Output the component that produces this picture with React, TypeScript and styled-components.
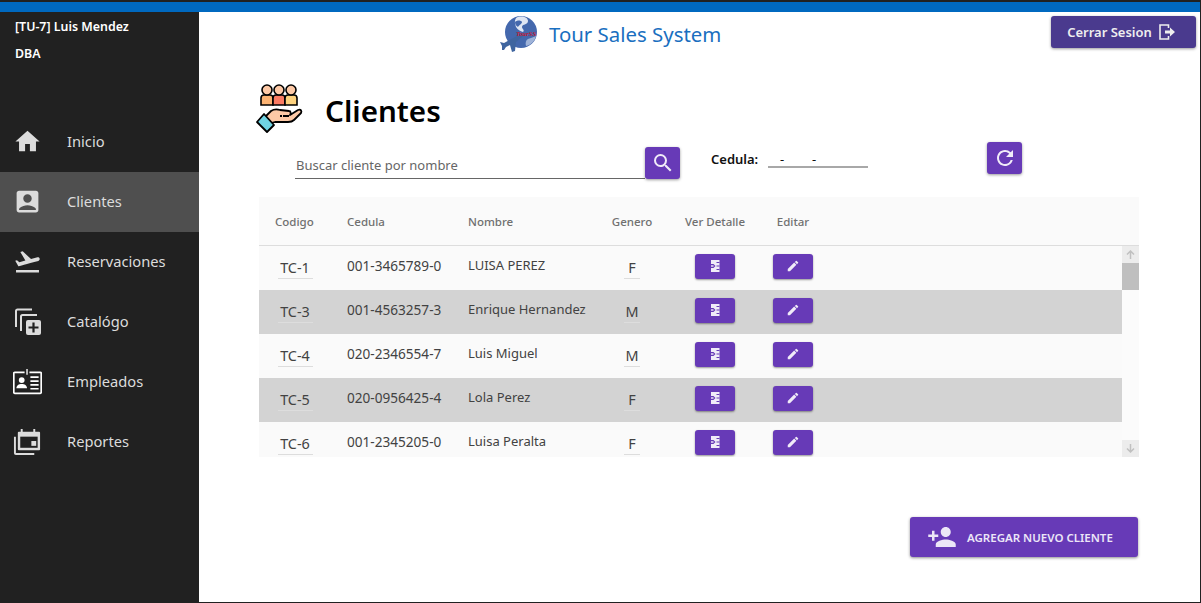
import styled, { createGlobalStyle } from 'styled-components';
import {
  MdAccountBox,
  MdCreate,
  MdFlightTakeoff,
  MdHome,
  MdPersonAdd,
  MdRefresh,
  MdSearch,
} from 'react-icons/md';

const GlobalStyle = createGlobalStyle`
  html, body {
    margin: 0;
    height: 100%;
    overflow: hidden;
    background: #fff;
    font-family: "Noto Sans", "Open Sans", sans-serif;
  }
  * { box-sizing: border-box; }
`;

const Page = styled.div`
  width: 1201px;
  height: 603px;
  display: flex;
  flex-direction: column;
  background: #fff;
  border-right: 1px solid #212121;
  border-bottom: 1px solid #212121;
`;

const TopBar = styled.div`
  height: 12px;
  flex: none;
  background: #0069c0;
  border-top: 2px solid #212121;
`;

const Body = styled.div`
  flex: 1;
  display: flex;
  min-height: 0;
`;

const Sidebar = styled.aside`
  width: 199px;
  flex: none;
  background: #212121;
`;

const UserBox = styled.div`
  height: 100px;
  padding: 1px 0 0 15px;
  color: #fff;
  font-size: 12.4px;
  font-weight: 600;
  line-height: 27px;
`;

const NavItem = styled.div<{ $active?: boolean }>`
  height: 60px;
  display: flex;
  align-items: center;
  padding: 0 0 2px 13px;
  gap: 25px;
  color: #dcdcdc;
  font-size: 14.7px;
  background: ${(p) => (p.$active ? '#4f4f4f' : 'transparent')};

  svg {
    width: 29px;
    height: 29px;
    flex: none;
    color: #dcdcdc;
  }
`;

const Main = styled.main`
  flex: 1;
  min-width: 0;
  display: flex;
  flex-direction: column;
`;

const Header = styled.header`
  height: 38px;
  display: flex;
  align-items: flex-start;
  padding: 0 4px 0 301px;
`;

const Brand = styled.div`
  display: flex;
  align-items: center;
  gap: 10px;
  height: 43px;
  color: #1a6fc0;
  font-size: 20.4px;
`;

const LogoutButton = styled.button`
  margin: 4px 0 0 auto;
  width: 145px;
  height: 32px;
  padding: 0 4px 0 0;
  display: flex;
  align-items: center;
  justify-content: center;
  gap: 6px;
  border: none;
  border-radius: 3px;
  background: #4a3a8e;
  color: #eee;
  font: 600 13px "Noto Sans", sans-serif;
  box-shadow: 0 1px 3px rgba(0, 0, 0, 0.4);
`;

const TitleRow = styled.div`
  display: flex;
  align-items: center;
  gap: 20px;
  height: 50px;
  margin: 33px 0 0 56px;
`;

const Title = styled.h1`
  margin: 4px 0 0;
  font-size: 29.6px;
  font-weight: 600;
  color: #000;
`;

const FilterRow = styled.div`
  display: flex;
  align-items: flex-start;
  height: 51px;
  margin: 13px 0 0 96px;
`;

const SearchField = styled.div`
  width: 350px;
  height: 28px;
  margin-top: 5px;
  padding: 5px 0 0 1px;
  border-bottom: 1px solid #666;
  color: #666;
  font-size: 13px;
`;

const IconButton = styled.button<{ $gap?: number; $top?: number }>`
  width: 35px;
  height: 32px;
  flex: none;
  margin-left: ${(p) => p.$gap ?? 0}px;
  margin-top: ${(p) => p.$top ?? 0}px;
  padding: 0;
  display: flex;
  align-items: center;
  justify-content: center;
  border: none;
  border-radius: 3px;
  background: #673ab7;
  color: #f0ebf8;
  box-shadow: 0 1px 3px rgba(0, 0, 0, 0.4);

  svg {
    width: 24px;
    height: 24px;
  }
`;

const CedulaLabel = styled.label`
  margin: 4px 0 0 31px;
  width: 57px;
  color: #111;
  font-size: 13px;
  font-weight: 600;
  line-height: 18px;
`;

const CedulaMask = styled.div`
  width: 100px;
  height: 22px;
  padding-left: 12px;
  border-bottom: 2px solid #a8a8a8;
  color: #111;
  font-size: 13px;
  line-height: 26px;

  span {
    display: inline-block;
    width: 32px;
  }
`;

const TableCard = styled.section`
  width: 880px;
  margin: 0 0 0 60px;
  background: #fafafa;
`;

const columns = '72px 121px 150px 60px 106px 50px 1fr';

const HeadRow = styled.div`
  height: 49px;
  display: grid;
  grid-template-columns: ${columns};
  align-items: center;
  border-bottom: 1px solid #ddd;
  color: #707070;
  font-size: 11.5px;
  font-weight: 500;
`;

const HeadCell = styled.div<{ $center?: boolean }>`
  padding-left: ${(p) => (p.$center ? 0 : 16)}px;
  text-align: ${(p) => (p.$center ? 'center' : 'left')};
  white-space: nowrap;
`;

const ScrollArea = styled.div`
  height: 211px;
  display: flex;
  overflow: hidden;
`;

const Rows = styled.div`
  flex: 1;
  min-width: 0;
`;

const Row = styled.div<{ $shaded: boolean }>`
  height: 44px;
  display: grid;
  grid-template-columns: ${columns};
  align-items: center;
  background: ${(p) => (p.$shaded ? '#d3d3d3' : '#fafafa')};
  color: #424242;
`;

const TextCell = styled.div<{ $size: number }>`
  padding: 0 0 6px 16px;
  font-size: ${(p) => p.$size}px;
  white-space: nowrap;
`;

const UnderlinedCell = styled.div<{ $wide?: boolean }>`
  display: flex;
  justify-content: center;
  padding-top: 1px;

  span {
    min-width: ${(p) => (p.$wide ? 35 : 16)}px;
    padding: 0 1px 1px;
    text-align: center;
    border-bottom: 1px solid #ddd;
    font-size: 14.4px;
    line-height: 19px;
  }
`;

const ActionCell = styled.div`
  display: flex;
  justify-content: center;
  padding-bottom: 4px;
`;

const RowButton = styled.button`
  width: 40px;
  height: 25px;
  flex: none;
  padding: 0;
  display: flex;
  align-items: center;
  justify-content: center;
  border: none;
  border-radius: 3px;
  background: #673ab7;
  color: #f0ebf8;
  box-shadow: 0 1px 2px rgba(0, 0, 0, 0.4);

  svg {
    width: 14px;
    height: 14px;
  }
`;

const ScrollBar = styled.div`
  width: 17px;
  flex: none;
  display: flex;
  flex-direction: column;
  background: #fbfbfb;
`;

const ScrollArrow = styled.div`
  height: 17px;
  flex: none;
  display: flex;
  align-items: center;
  justify-content: center;
  background: #ececec;
  color: #c0c0c0;
`;

const ScrollThumb = styled.div`
  height: 27px;
  flex: none;
  background: #bfbfbf;
`;

const ScrollTrack = styled.div`
  flex: 1;
`;

const Footer = styled.div`
  display: flex;
  justify-content: flex-end;
  margin: 60px 62px 0 0;
`;

const AddButton = styled.button`
  width: 228px;
  height: 40px;
  padding: 0 0 0 17px;
  display: flex;
  align-items: center;
  gap: 10px;
  border: none;
  border-radius: 3px;
  background: #673ab7;
  color: #ece6f7;
  font: 600 11.5px "Noto Sans", sans-serif;
  box-shadow: 0 1px 3px rgba(0, 0, 0, 0.45);

  svg {
    width: 30px;
    height: 30px;
    flex: none;
  }
`;

const CatalogIcon = () => (
  <svg viewBox="0 0 29 29" fill="none">
    <path d="M3 20V4a1.500 1.500 0 0 1 1.500-1.500H19" stroke="#dcdcdc" strokeWidth="2" />
    <path d="M8 24V9.500A1.500 1.500 0 0 1 9.500 8H24" stroke="#dcdcdc" strokeWidth="2" />
    <rect x="13" y="13" width="15" height="15" rx="2" fill="#dcdcdc" />
    <path d="M20.500 15.500v10M15.500 20.500h10" stroke="#212121" strokeWidth="2.200" />
  </svg>
);

const EmployeeIcon = () => (
  <svg viewBox="0 0 30 26" fill="none">
    <path d="M12 3.500H1.800a1 1 0 0 0-1 1v19.700a1 1 0 0 0 1 1h26.400a1 1 0 0 0 1-1V4.500a1 1 0 0 0-1-1H17" stroke="#fff" strokeWidth="1.800" />
    <path d="M14.500 0v6" stroke="#fff" strokeWidth="1.400" />
    <circle cx="9" cy="11.500" r="3" fill="#fff" />
    <path d="M3.500 20c0-3 2.500-4.500 5.500-4.500s5.500 1.500 5.500 4.500z" fill="#fff" />
    <path d="M18 8.500h8.500M18 12.500h8.500M18 16.500h8.500M18 20.500h8.500" stroke="#fff" strokeWidth="1.800" />
  </svg>
);

const ReportIcon = () => (
  <svg viewBox="0 0 30 30" fill="none">
    <path d="M8 2h2v3h11V2h2v3h4a1 1 0 0 1 1 1v17a1 1 0 0 1-1 1H6a1 1 0 0 1-1-1V6a1 1 0 0 1 1-1h2z" fill="#dcdcdc" />
    <rect x="7.500" y="10" width="18" height="11.500" fill="#212121" />
    <rect x="19" y="14.500" width="5" height="5" fill="#dcdcdc" />
    <path d="M2 10v17a1 1 0 0 0 1 1h19" stroke="#dcdcdc" strokeWidth="2" />
  </svg>
);

const LogoutIcon = () => (
  <svg width="18" height="18" viewBox="0 0 18 18" fill="none" stroke="#eee">
    <path d="M10.500 5V2H2v14h8.500v-3" strokeWidth="1.600" />
    <path d="M7 7.500h5V4.500L17 9l-5 4.500v-3H7z" fill="#eee" stroke="none" />
  </svg>
);

const DetailIcon = () => (
  <svg viewBox="0 0 14 14" fill="none">
    <path d="M3 1h8.500v12H3V9h2.500l2-2-2-2H3z" fill="#f0ebf8" />
    <path d="M3 7h2.500" stroke="#f0ebf8" strokeWidth="1.400" />
    <path d="M8.500 3.500h3M8.500 7h3M8.500 10.500h3" stroke="#673ab7" strokeWidth="1" />
  </svg>
);

const Logo = () => (
  <svg width="39" height="38" viewBox="0 0 39 38">
    <circle cx="21" cy="17" r="16" fill="#4468ad" />
    <path d="M16 3c5-3 12-1 12 3 0 4-6 3-6 6 0 2 3 3 1 5-3-1-5-2-7-5-1-3-2-6 0-9z" fill="#dfe6f3" />
    <path d="M15 7c2-2 6-2 7 0 0 2-3 3-4 5-2-1-3-3-3-5z" fill="#4468ad" />
    <path d="M28 24c3-1 6-2 8-3-1 5-5 9-10 10-1-3 0-6 2-7z" fill="#9fb3d8" />
    <path d="M0 27l4 1 15-8c3-1 5 0 3 2l-6 5-1 9-3 1-2-7-4 2-2 3-2 0 0-4z" fill="#3f659f" />
    <text x="16" y="21" fontSize="6.500" fontStyle="italic" fontWeight="700" fill="#c2182e" fontFamily="Liberation Serif, serif">
      TourSS
    </text>
  </svg>
);

const ClientsIcon = () => (
  <svg width="50" height="50" viewBox="0 0 50 50">
    <g stroke="#000" strokeWidth="1.600">
      <path d="M6 22v-7a3 3 0 0 1 3-3h6a3 3 0 0 1 3 3v7z" fill="#fcb373" />
      <path d="M18 22v-7a3 3 0 0 1 3-3h6a3 3 0 0 1 3 3v7z" fill="#fb7b63" />
      <path d="M30 22v-7a3 3 0 0 1 3-3h6a3 3 0 0 1 3 3v7z" fill="#fdd27e" />
      <circle cx="12" cy="7" r="5" fill="#fdc9a6" />
      <circle cx="24" cy="7" r="5" fill="#fdc9a6" />
      <circle cx="36" cy="7" r="5" fill="#fdc9a6" />
    </g>
    <path
      d="M10 34l6-6c3-2 6-2 9-1l9 1c2 0 2 3 1 4l8-5c3-1 4 1 3 3l-7 7c-2 2-4 2-6 2H20l-4 1z"
      fill="#fdc9a6"
      stroke="#000"
      strokeWidth="1.800"
      strokeLinejoin="round"
    />
    <path d="M25 33h9" stroke="#000" strokeWidth="1.800" strokeDasharray="2 1 7" />
    <path d="M9 31l10 11-7 7L2 39z" fill="#6fd3e3" stroke="#000" strokeWidth="1.800" strokeLinejoin="round" />
  </svg>
);

const navItems = [
  { label: 'Inicio', icon: <MdHome /> },
  { label: 'Clientes', icon: <MdAccountBox />, active: true },
  { label: 'Reservaciones', icon: <MdFlightTakeoff /> },
  { label: 'Catalógo', icon: <CatalogIcon /> },
  { label: 'Empleados', icon: <EmployeeIcon /> },
  { label: 'Reportes', icon: <ReportIcon /> },
];

const clients = [
  { code: 'TC-1', cedula: '001-3465789-0', name: 'LUISA PEREZ', gender: 'F' },
  { code: 'TC-3', cedula: '001-4563257-3', name: 'Enrique Hernandez', gender: 'M' },
  { code: 'TC-4', cedula: '020-2346554-7', name: 'Luis Miguel', gender: 'M' },
  { code: 'TC-5', cedula: '020-0956425-4', name: 'Lola Perez', gender: 'F' },
  { code: 'TC-6', cedula: '001-2345205-0', name: 'Luisa Peralta', gender: 'F' },
];

export default function App() {
  return (
    <Page>
      <GlobalStyle />
      <TopBar />
      <Body>
        <Sidebar>
          <UserBox>
            [TU-7] Luis Mendez
            <br />
            DBA
          </UserBox>
          {navItems.map((item) => (
            <NavItem key={item.label} $active={item.active}>
              {item.icon}
              {item.label}
            </NavItem>
          ))}
        </Sidebar>
        <Main>
          <Header>
            <Brand>
              <Logo />
              Tour Sales System
            </Brand>
            <LogoutButton>
              Cerrar Sesion
              <LogoutIcon />
            </LogoutButton>
          </Header>
          <TitleRow>
            <ClientsIcon />
            <Title>Clientes</Title>
          </TitleRow>
          <FilterRow>
            <SearchField>Buscar cliente por nombre</SearchField>
            <IconButton $top={1}>
              <MdSearch />
            </IconButton>
            <CedulaLabel>Cedula:</CedulaLabel>
            <CedulaMask>
              <span>-</span>
              <span>-</span>
            </CedulaMask>
            <IconButton $gap={119} $top={-4}>
              <MdRefresh />
            </IconButton>
          </FilterRow>
          <TableCard>
            <HeadRow>
              <HeadCell>Codigo</HeadCell>
              <HeadCell>Cedula</HeadCell>
              <HeadCell>Nombre</HeadCell>
              <HeadCell $center>Genero</HeadCell>
              <HeadCell $center>Ver Detalle</HeadCell>
              <HeadCell $center>Editar</HeadCell>
            </HeadRow>
            <ScrollArea>
              <Rows>
                {clients.map((client, i) => (
                  <Row key={client.code} $shaded={i % 2 === 1}>
                    <UnderlinedCell $wide>
                      <span>{client.code}</span>
                    </UnderlinedCell>
                    <TextCell $size={13.6}>{client.cedula}</TextCell>
                    <TextCell $size={13}>{client.name}</TextCell>
                    <UnderlinedCell>
                      <span>{client.gender}</span>
                    </UnderlinedCell>
                    <ActionCell>
                      <RowButton>
                        <DetailIcon />
                      </RowButton>
                    </ActionCell>
                    <ActionCell>
                      <RowButton>
                        <MdCreate />
                      </RowButton>
                    </ActionCell>
                  </Row>
                ))}
              </Rows>
              <ScrollBar>
                <ScrollArrow>
                  <svg width="9" height="9" viewBox="0 0 9 9" fill="none" stroke="currentColor" strokeWidth="1.500">
                    <path d="M4.500 9V1M1 4.500 4.500 1 8 4.500" />
                  </svg>
                </ScrollArrow>
                <ScrollThumb />
                <ScrollTrack />
                <ScrollArrow>
                  <svg width="9" height="9" viewBox="0 0 9 9" fill="none" stroke="currentColor" strokeWidth="1.500">
                    <path d="M4.500 0v8M1 4.500 4.500 8 8 4.500" />
                  </svg>
                </ScrollArrow>
              </ScrollBar>
            </ScrollArea>
          </TableCard>
          <Footer>
            <AddButton>
              <MdPersonAdd />
              AGREGAR NUEVO CLIENTE
            </AddButton>
          </Footer>
        </Main>
      </Body>
    </Page>
  );
}
